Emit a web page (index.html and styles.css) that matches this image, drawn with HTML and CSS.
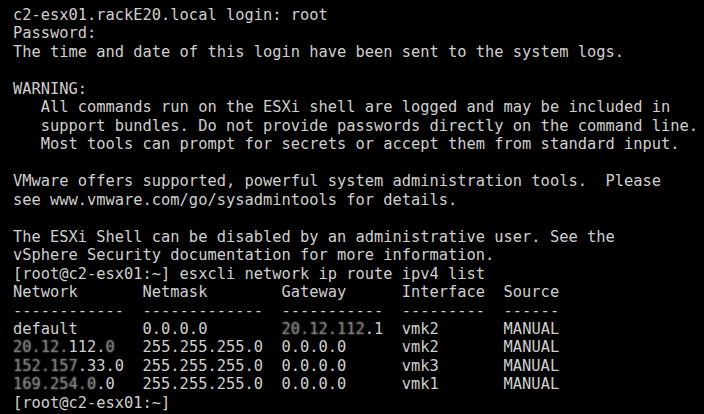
FILE: index.html
```html
<!DOCTYPE html>
<html>
<head>
<meta charset="utf-8">
<link rel="stylesheet" href="styles.css">
</head>
<body>
<div class="console">
<div class="line">c2-esx01.rackE20.local login: root</div>
<div class="line">Password:</div>
<div class="line">The time and date of this login have been sent to the system logs.</div>
<div class="line"></div>
<div class="line">WARNING:</div>
<div class="line">   All commands run on the ESXi shell are logged and may be included in</div>
<div class="line">   support bundles. Do not provide passwords directly on the command line.</div>
<div class="line">   Most tools can prompt for secrets or accept them from standard input.</div>
<div class="line"></div>
<div class="line">VMware offers supported, powerful system administration tools.  Please</div>
<div class="line">see www.vmware.com/go/sysadmintools for details.</div>
<div class="line"></div>
<div class="line">The ESXi Shell can be disabled by an administrative user. See the</div>
<div class="line">vSphere Security documentation for more information.</div>
<div class="line">[root@c2-esx01:~] esxcli network ip route ipv4 list</div>
<div class="line">Network       Netmask        Gateway      Interface  Source</div>
<div class="line">------------  -------------  -----------  ---------  ------</div>
<div class="line">default       0.0.0.0        <span class="redact">20.12.112</span><span>.1  vmk2       MANUAL</span></div>
<div class="line"><span class="redact">20.12.</span><span>112.</span><span class="redact">0</span><span>   255.255.255.0  0.0.0.0      vmk2       MANUAL</span></div>
<div class="line"><span class="redact">152.157</span><span>.33.0  255.255.255.0  0.0.0.0      vmk3       MANUAL</span></div>
<div class="line"><span class="redact">169.254.0</span><span>.0   255.255.255.0  0.0.0.0      vmk1       MANUAL</span></div>
<div class="line">[root@c2-esx01:~]</div>
</div>
</body>
</html>
```
FILE: styles.css
```css
html, body {
  margin: 0;
  padding: 0;
  background: #000;
  width: 704px;
  height: 414px;
  overflow: hidden;
}

.console {
  display: flex;
  flex-direction: column;
  padding: 6px 0 0 13px;
  font-family: "DejaVu Sans Mono", "Liberation Mono", monospace;
  font-size: 15.38px;
  line-height: 18.48px;
  color: #cfcfcf;
}

.line {
  height: 18.48px;
  white-space: pre;
}

.redact {
  color: rgba(200, 200, 200, 0.35);
  text-shadow: 0 0 2px rgba(220, 220, 220, 0.6);
}
```
